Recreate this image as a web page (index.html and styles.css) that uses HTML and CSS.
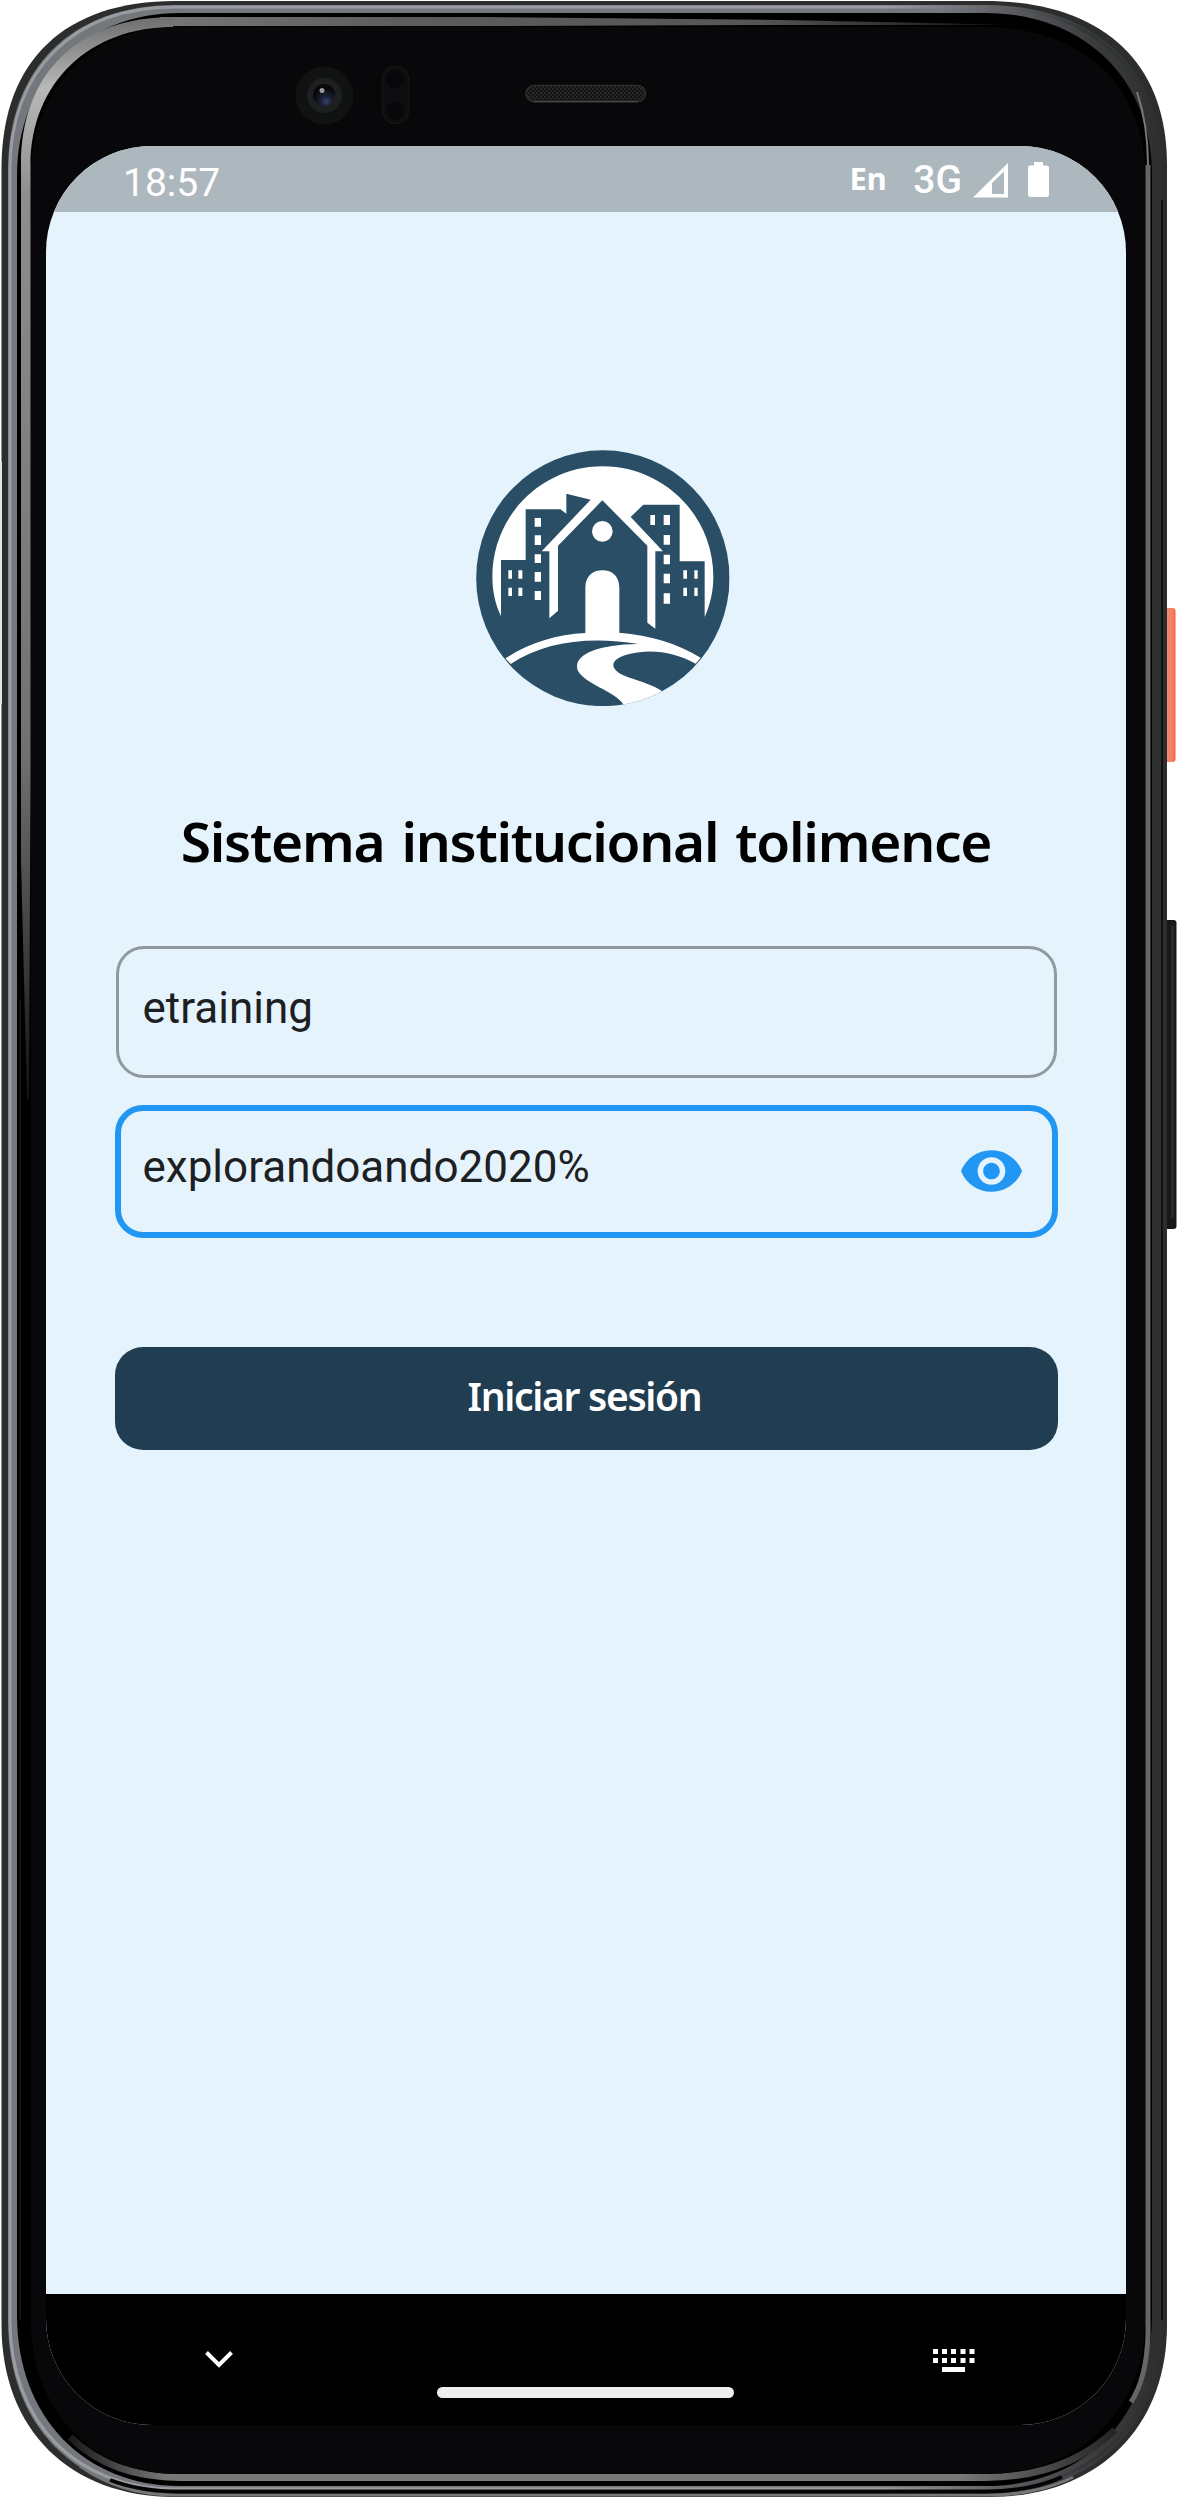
FILE: index.html
```html
<!DOCTYPE html>
<html lang="es">
<head>
<meta charset="utf-8">
<title>Sistema institucional tolimence</title>
<link rel="stylesheet" href="styles.css">
</head>
<body>
<div class="device">
  <svg class="frame" viewBox="0 0 1178 2498" aria-hidden="true">
    <defs>
      <linearGradient id="power" x1="0" x2="1"><stop offset="0" stop-color="#c85741"/><stop offset=".3" stop-color="#f28a70"/><stop offset=".8" stop-color="#f08067"/><stop offset="1" stop-color="#ff5c39"/></linearGradient>
      <linearGradient id="fade" x1="0" y1="0" x2="0" y2="2498" gradientUnits="userSpaceOnUse"><stop offset="0" stop-color="#5c5c5c"/><stop offset=".035" stop-color="#b8b8b8"/><stop offset=".08" stop-color="#8d8d8d"/><stop offset=".3" stop-color="#717171"/><stop offset=".36" stop-color="#4c4c4c"/><stop offset=".44" stop-color="#111"/></linearGradient>
      <linearGradient id="rail" x1="0" x2="1178" y1="0" y2="0" gradientUnits="userSpaceOnUse"><stop offset="0" stop-color="#74777c"/><stop offset=".8" stop-color="#74777c"/><stop offset=".93" stop-color="#3a3b3d"/><stop offset="1" stop-color="#292b2d"/></linearGradient>
      <linearGradient id="shine" x1="0" x2="1178" y1="0" y2="0" gradientUnits="userSpaceOnUse"><stop offset="0" stop-color="#9a9ca2"/><stop offset=".75" stop-color="#9a9ca2"/><stop offset=".92" stop-color="#333537"/><stop offset="1" stop-color="#2d2e30"/></linearGradient>
      <linearGradient id="topstrip" x1="150" x2="1010" y1="0" y2="0" gradientUnits="userSpaceOnUse"><stop offset="0" stop-color="#777"/><stop offset=".3" stop-color="#5c5c5c"/><stop offset=".7" stop-color="#565656"/><stop offset="1" stop-color="#111"/></linearGradient>
      <linearGradient id="foot" x1="60" x2="1120" y1="0" y2="0" gradientUnits="userSpaceOnUse"><stop offset="0" stop-color="#111"/><stop offset=".1" stop-color="#777"/><stop offset=".85" stop-color="#777"/><stop offset="1" stop-color="#222"/></linearGradient>
      <pattern id="mesh" width="4" height="4" patternUnits="userSpaceOnUse"><rect width="4" height="4" fill="#131313"/><circle cx="1" cy="1" r=".8" fill="#444"/><circle cx="3" cy="3" r=".8" fill="#383838"/></pattern>
      <radialGradient id="lens" cx=".6" cy=".8" r=".6"><stop offset="0" stop-color="#36426a"/><stop offset=".4" stop-color="#1c2238"/><stop offset="1" stop-color="#08080b"/></radialGradient>
    </defs>
    <rect x="1162" y="602" width="14" height="118" fill="none"/>
    <rect x="1162" y="608" width="13.500" height="154" rx="3" fill="url(#power)"/>
    <rect x="1162" y="920" width="14.500" height="309" rx="3" fill="#181818"/>
    <rect x="1171" y="926" width="3" height="292" fill="#2a2a2a"/>
    <path fill="#2c2e2d" d="M1.500 165C3 60 65 1 175 1H985C1100 1 1167 60 1167 165V2325C1167 2430 1095 2497 990 2497H175C70 2497 1.500 2430 1.500 2325Z"/>
    <path fill="none" stroke="#777" stroke-width="3" d="M80 2466C108 2486 138 2495 175 2495H990C1018 2495 1050 2489 1073 2477"/>
    <path fill="url(#rail)" d="M8 170C8 70 70 5 175 5H985C1095 5 1163 70 1163 170V2320C1163 2425 1095 2493 990 2493H175C75 2493 8 2425 8 2320Z"/>
    <path fill="none" stroke="url(#shine)" stroke-width="3" d="M10 170C10 72 72 7 175 7H985C1093 7 1160 72 1160 170V2320C1160 2423 1093 2489 990 2489H175C77 2489 10 2423 10 2320Z"/>
    <path fill="#000" d="M17 175C17 80 85 13 180 13H985C1085 13 1152 80 1152 175V2315C1152 2418 1085 2486 985 2486H180C85 2486 17 2418 17 2315Z"/>
    <path fill="none" stroke="#050505" stroke-width="4" d="M110 2480Q140 2491.500 180 2491.500H985Q1030 2491.500 1062 2477"/>
    <path fill="none" stroke="url(#topstrip)" stroke-width="9" d="M160 21.500H480"/>
    <path fill="url(#topstrip)" d="M480 17L780 20C850 21.500 940 23 1010 25H780L480 26Z"/>
    <path fill="url(#fade)" d="M21 165C21 72 80 17 173 17V27C90 27 31 82 30.500 165V780L29 1100H27L21 860Z"/>
    <path fill="none" stroke="#666" stroke-width="5" d="M1148 165V2335C1147 2365 1141 2387 1131 2402"/>
    <path fill="none" stroke="#777" stroke-width="2" d="M1137 92Q1148 125 1148 165"/>
    <path fill="none" stroke="#101113" stroke-width="2" d="M1162 200V2320M20 1000V2320"/>
    <path fill="none" stroke="url(#foot)" stroke-width="7" d="M70 2437Q112 2477.500 180 2477.500H985Q1065 2477.500 1115 2430"/>
    <path fill="#08080a" d="M31 175C31 88 91 27 178 27H985C1084 27 1145 88 1145 175V2320C1145 2410 1080 2474 985 2474H178C91 2474 31 2410 31 2320Z"/>
    <path stroke="#e4e6e4" stroke-width="2" d="M1 462V704"/>
    <circle cx="324.500" cy="95.500" r="29" fill="#111212"/>
    <circle cx="324.500" cy="95.500" r="17.500" fill="#1e1f20"/>
    <circle cx="324" cy="95" r="11" fill="url(#lens)"/>
    <circle cx="322" cy="90.500" r="2.500" fill="#99999d"/>
    <rect x="382.500" y="66.500" width="26" height="57" rx="13" fill="#0d0d0f" stroke="#151517" stroke-width="1.500"/>
    <circle cx="395" cy="79" r="10" fill="#08080a" stroke="#121214"/>
    <circle cx="395" cy="110.500" r="10" fill="#08080a" stroke="#121214"/>
    <rect x="526" y="85.500" width="119.500" height="16" rx="8" fill="url(#mesh)" stroke="#2d2e2e" stroke-width="1.500"/>
    <path stroke="#505252" d="M534 101.800H638"/>
  </svg>

  <main class="screen">
    <header class="status">
      <span class="clock">18:57</span>
      <span class="lang">En</span>
      <span class="network">3G</span>
      <svg class="signal" viewBox="0 0 35 35"><path fill="#fff" fill-rule="evenodd" d="M0 34.500L35 0V34.500ZM19 20V31H31V8.500Z"/></svg>
      <svg class="battery" viewBox="0 0 21 35"><path fill="#fff" d="M6 0H15V3.500H19Q21 3.500 21 6V32Q21 35 18.500 35H2.500Q0 35 0 32V6Q0 3.500 2 3.500H6Z"/></svg>
    </header>

    <section class="login">
      <svg class="logo" viewBox="50 61 761 769" role="img" aria-label="Logo">
        <defs><clipPath id="disc"><ellipse cx="430.500" cy="445.500" rx="380" ry="384"/></clipPath></defs>
        <g clip-path="url(#disc)">
          <rect x="50" y="61" width="761" height="769" fill="#294e65"/>
          <path fill="#fff" d="M125 560C108 525 99 485 99 440C99 258 247 110 430 110S762 258 762 440C762 485 753 525 736 562V395H661V225H552L514 262L611 365H588V597L564 579V348L429 212L296 348V543L270 566V365H247L394 210L321 192V252L303 239H199V391H125Z"/>
          <circle cx="429" cy="305" r="31" fill="#fff"/>
          <path fill="#fff" d="M378 610V475C378 440 399 422 429 422S480 440 480 475V609C575 617 650 640 724 684L709 702C650 668 575 656 510 673C472 682 458 697 463 712C477 746 555 749 608 784L560 840H500L491 823C467 785 374 763 355 722C341 678 405 645 537 643C390 618 250 637 154 703L138 686C210 640 290 614 378 610Z"/>
          <path fill="#fff" d="M226 265h19v26h-19zM226 317h19v29h-19zM226 374h19v26h-19zM226 427h19v29h-19zM226 484h19v27h-19zM147 422h11v25h-11zM177 422h12v25h-12zM147 474h11v25h-11zM177 474h12v25h-12zM573 256h14v30h-14zM613 256h19v30h-19zM613 316h19v29h-19zM613 375h19v29h-19zM613 432h19v29h-19zM613 491h19v31h-19zM672 422h11v25h-11zM705 422h10v25h-10zM672 474h11v25h-11zM705 474h10v25h-10z"/>
        </g>
      </svg>
      <h1 class="title">Sistema institucional tolimence</h1>
      <div class="field"><span>etraining</span></div>
      <div class="field field-active">
        <span>explorandoando2020%</span>
        <svg class="eye" viewBox="1 4.500 22 15"><path fill="#2196f3" d="M12 4.500C7 4.500 2.730 7.610 1 12c1.730 4.390 6 7.500 11 7.500s9.270-3.110 11-7.500c-1.730-4.390-6-7.500-11-7.500zM12 17c-2.760 0-5-2.240-5-5s2.240-5 5-5 5 2.240 5 5-2.240 5-5 5zm0-8c-1.660 0-3 1.340-3 3s1.340 3 3 3 3-1.340 3-3-1.340-3-3-3z"/></svg>
      </div>
      <button class="submit" type="button">Iniciar sesión</button>
    </section>

    <nav class="navbar">
      <svg class="chevron" viewBox="0 0 28 18"><path d="M1.500 1.500L14 14L26.500 1.500" fill="none" stroke="#fff" stroke-width="4"/></svg>
      <span class="home"></span>
      <svg class="keyboard" viewBox="0 0 42 23"><path fill="#fff" d="M0 0h5v5H0zM9 0h5v5H9zM18 0h5v5h-5zM27.500 0h5v5h-5zM36.500 0h5v5h-5zM0 9h5v5H0zM9 9h5v5H9zM18 9h5v5h-5zM27.500 9h5v5h-5zM36.500 9h5v5h-5zM9 18h23v5H9z"/></svg>
    </nav>
  </main>
</div>
</body>
</html>
```
FILE: styles.css
```css
* { box-sizing: border-box; }

body {
  margin: 0;
  background: #fff;
  font-family: Roboto, sans-serif;
}

.device {
  position: relative;
  width: 1178px;
  height: 2498px;
  padding: 146px 52px 73px 46px;
}

.frame {
  position: absolute;
  inset: 0;
  width: 1178px;
  height: 2498px;
}

.screen {
  position: relative;
  display: flex;
  flex-direction: column;
  width: 1080px;
  height: 2279px;
  overflow: hidden;
  border-radius: 106px;
  background: #e5f3fd;
}

.status {
  display: flex;
  flex: none;
  height: 66px;
  padding: 0 77px 0 77px;
  background: #adb8be;
  color: #fff;
}

.clock {
  margin-right: auto;
  font-size: 39px;
  line-height: 74px;
}

.lang {
  margin-right: 27px;
  font-family: "Open Sans", sans-serif;
  font-size: 31px;
  font-weight: 700;
  letter-spacing: -0.5px;
  line-height: 65px;
}

.network {
  margin-right: 11px;
  font-size: 39px;
  font-weight: 500;
  line-height: 69px;
}

.signal {
  width: 35px;
  height: 35px;
  margin: 17px 20px 0 0;
}

.battery {
  width: 21px;
  height: 35px;
  margin-top: 16px;
}

.login {
  display: flex;
  flex: 1;
  flex-direction: column;
  padding: 238px 68.500px 0;
}

.logo {
  align-self: center;
  width: 253.700px;
  height: 256.300px;
  margin-left: 34px;
}

.title {
  margin: 95.200px 0 64.500px;
  color: #000;
  font-family: "Noto Sans", sans-serif;
  font-size: 55px;
  font-weight: 600;
  letter-spacing: -1.250px;
  line-height: 80px;
  text-align: center;
  white-space: nowrap;
  word-spacing: 4px;
}

.field {
  display: flex;
  align-items: center;
  justify-content: space-between;
  height: 132px;
  margin: 0 1px;
  padding: 0 30px 8px 24px;
  border: 3px solid #8f999f;
  border-radius: 28px;
  color: #1d2022;
  font-size: 44px;
}

.field-active {
  height: 133px;
  margin: 27px 0 0;
  padding: 0 30px 8px 22px;
  border: 6px solid #2196f3;
}

.eye {
  width: 61px;
  height: 42px;
  margin-top: 8px;
}

.submit {
  height: 103px;
  margin-top: 109px;
  padding: 0 3px 5px 0;
  border: 0;
  border-radius: 28px;
  background: #213d52;
  color: #fff;
  font-family: "Noto Sans", sans-serif;
  font-size: 39px;
  font-weight: 600;
  letter-spacing: -1.300px;
}

.navbar {
  display: flex;
  flex: none;
  justify-content: space-between;
  height: 131px;
  padding: 0 151px 0 159px;
  background: #000;
}

.chevron {
  width: 28px;
  height: 18px;
  margin-top: 57px;
}

.home {
  width: 297px;
  height: 11px;
  margin: 93px 0 0 4px;
  border-radius: 6px;
  background: #eee;
}

.keyboard {
  width: 42px;
  height: 23px;
  margin-top: 55px;
}
```
